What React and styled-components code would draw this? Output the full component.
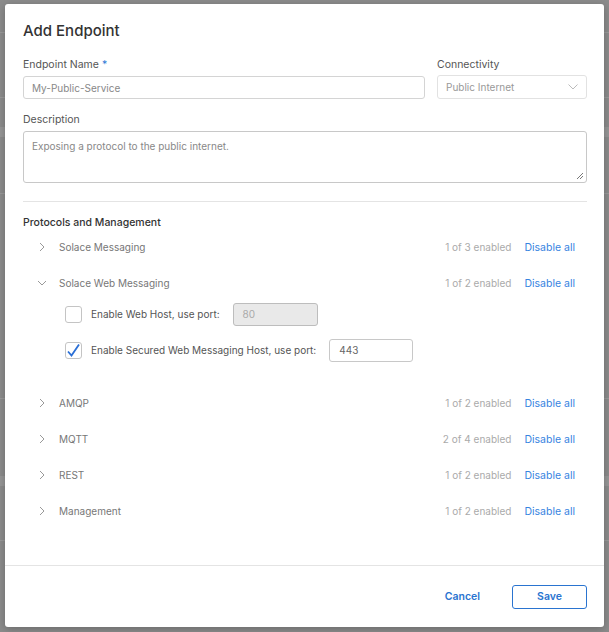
import React from "react";
import styled, { createGlobalStyle } from "styled-components";

const Global = createGlobalStyle`
  html, body { margin: 0; padding: 0; }
  body {
    background: #8c8c8c;
    font-family: Inter, "Noto Sans", sans-serif;
    width: 609px;
    height: 632px;
    overflow: hidden;
  }
`;

const Backdrop = styled.div`
  width: 609px;
  height: 632px;
  box-sizing: border-box;
  padding: 4px 5px 5px 5px;
  background:
    linear-gradient(#9a9a9a, #9a9a9a) 0 32px / 100% 1px no-repeat,
    linear-gradient(#9a9a9a, #9a9a9a) 0 97px / 100% 1px no-repeat,
    linear-gradient(#979797, #979797) 0 127px / 100% 10px no-repeat,
    linear-gradient(#9a9a9a, #9a9a9a) 0 193px / 100% 1px no-repeat,
    linear-gradient(#9a9a9a, #9a9a9a) 0 398px / 100% 1px no-repeat,
    linear-gradient(#979797, #979797) 0 476px / 100% 10px no-repeat,
    linear-gradient(#9a9a9a, #9a9a9a) 0 540px / 100% 1px no-repeat,
    #8c8c8c;
`;

const Modal = styled.div`
  width: 599px;
  height: 623px;
  background: #fff;
  border-radius: 3px;
  box-shadow: 0 2px 8px rgba(0,0,0,0.25);
  display: flex;
  flex-direction: column;
  box-sizing: border-box;
`;

const Body = styled.div`
  flex: 1;
  padding: 18px 17px 0 18px;
  display: flex;
  flex-direction: column;
`;

const Title = styled.h1`
  margin: 0;
  font-size: 15px;
  font-weight: 500;
  color: #333;
  line-height: 18px;
`;

const FieldRow = styled.div`
  display: grid;
  grid-template-columns: 402px 150px;
  column-gap: 12px;
  margin-top: 18px;
`;

const Field = styled.div`
  display: flex;
  flex-direction: column;
`;

const Label = styled.label`
  font-size: 10.5px;
  color: #555;
  line-height: 13px;
  margin-bottom: 5px;
`;

const Req = styled.span`
  color: #2a7ad6;
`;

const TextInput = styled.div`
  height: 23px;
  box-sizing: border-box;
  border: 1px solid #d4d4d4;
  border-radius: 3px;
  padding: 0 8px;
  display: flex;
  align-items: center;
  font-size: 10px;
  color: #888;
`;

const Select = styled(TextInput)`
  justify-content: space-between;
  border-color: #e2e2e2;
  color: #999;
  height: 24px;
  margin-top: -1px;
`;

const TextArea = styled.div`
  position: relative;
  height: 52px;
  box-sizing: border-box;
  border: 1px solid #c8c8c8;
  border-radius: 3px;
  padding: 8px 8px;
  font-size: 10px;
  color: #888;
`;

const Grip = styled.svg`
  position: absolute;
  right: 2px;
  bottom: 2px;
`;

const DescField = styled(Field)`
  margin-top: 14px;
`;

const Divider = styled.hr`
  border: none;
  border-top: 1px solid #e4e4e4;
  margin: 18px 0 0 0;
`;

const SectionTitle = styled.div`
  margin-top: 14px;
  font-size: 10.5px;
  font-weight: 500;
  color: #333;
  line-height: 13px;
`;

const List = styled.div`
  display: flex;
  flex-direction: column;
`;

const Row = styled.div`
  display: flex;
  align-items: center;
  height: 36px;
  padding-left: 14px;
  padding-right: 12px;
`;

const Chevron = styled.svg`
  width: 10px;
  height: 10px;
  margin-right: 12px;
  flex: none;
`;

const RowLabel = styled.span`
  font-size: 10px;
  color: #777;
  flex: 1;
`;

const Count = styled.span`
  font-size: 10px;
  color: #aaa;
  margin-right: 13px;
`;

const Link = styled.span`
  font-size: 10.5px;
  color: #3784df;
`;

const SubList = styled.div`
  margin-top: -5px;
  padding-bottom: 17px;
`;

const SubRow = styled.div`
  display: flex;
  align-items: center;
  height: 36px;
  padding-left: 42px;
`;

const Check = styled.div`
  width: 17px;
  height: 17px;
  box-sizing: border-box;
  border: 1px solid #c4c4c4;
  border-radius: 3px;
  margin-right: 9px;
  display: flex;
  align-items: center;
  justify-content: center;
`;

const SubLabel = styled.span`
  font-size: 10px;
  color: #555;
  margin-right: 13px;
`;

const Port = styled.div`
  width: ${p => p.$w}px;
  height: 23px;
  box-sizing: border-box;
  border: 1px solid ${p => (p.$disabled ? "#bdbdbd" : "#c8c8c8")};
  background: ${p => (p.$disabled ? "#e9e9e9" : "#fff")};
  border-radius: 3px;
  display: flex;
  align-items: center;
  padding-left: 9px;
  font-size: 10px;
  color: ${p => (p.$disabled ? "#aaa" : "#666")};
`;

const Footer = styled.div`
  border-top: 1px solid #e4e4e4;
  height: 61px;
  display: flex;
  align-items: center;
  justify-content: flex-end;
  padding-right: 17px;
  gap: 32px;
`;

const TextButton = styled.button`
  background: none;
  border: none;
  font-family: inherit;
  font-size: 10.5px;
  font-weight: 600;
  color: #2a74d0;
  padding: 0;
`;

const OutlineButton = styled.button`
  width: 75px;
  height: 24px;
  background: #fff;
  border: 1px solid #2a74d0;
  border-radius: 3px;
  font-family: inherit;
  font-size: 10.5px;
  font-weight: 600;
  color: #2a74d0;
`;

const ChevronRight = () => (
  <Chevron viewBox="0 0 10 10">
    <path d="M3 1 L7 5 L3 9" fill="none" stroke="#999" strokeWidth="1" />
  </Chevron>
);
const ChevronDown = () => (
  <Chevron viewBox="0 0 10 10">
    <path d="M1 3 L5 7 L9 3" fill="none" stroke="#999" strokeWidth="1" />
  </Chevron>
);

const ProtocolRow = ({ name, count, open }) => (
  <Row>
    {open ? <ChevronDown /> : <ChevronRight />}
    <RowLabel>{name}</RowLabel>
    <Count>{count}</Count>
    <Link>Disable all</Link>
  </Row>
);

export default function App() {
  return (
    <>
      <Global />
      <Backdrop>
        <Modal>
          <Body>
            <Title>Add Endpoint</Title>
            <FieldRow>
              <Field>
                <Label>
                  Endpoint Name <Req>*</Req>
                </Label>
                <TextInput>My-Public-Service</TextInput>
              </Field>
              <Field>
                <Label>Connectivity</Label>
                <Select>
                  Public Internet
                  <svg width="10" height="6" viewBox="0 0 10 6">
                    <path d="M0.5 0.5 L5 5 L9.5 0.5" fill="none" stroke="#bbb" strokeWidth="1" />
                  </svg>
                </Select>
              </Field>
            </FieldRow>
            <DescField>
              <Label>Description</Label>
              <TextArea>
                Exposing a protocol to the public internet.
                <Grip width="8" height="8" viewBox="0 0 8 8">
                  <path d="M1 7 L7 1 M4 7 L7 4" stroke="#555" strokeWidth="0.8" />
                </Grip>
              </TextArea>
            </DescField>
            <Divider />
            <SectionTitle>Protocols and Management</SectionTitle>
            <List>
              <ProtocolRow name="Solace Messaging" count="1 of 3 enabled" />
              <ProtocolRow name="Solace Web Messaging" count="1 of 2 enabled" open />
              <SubList>
                <SubRow>
                  <Check />
                  <SubLabel>Enable Web Host, use port:</SubLabel>
                  <Port $w={85} $disabled>80</Port>
                </SubRow>
                <SubRow>
                  <Check>
                    <svg width="15" height="15" viewBox="0 0 15 15">
                      <path d="M2 8.5 L5.5 12.5 L13 1.5" fill="none" stroke="#2a6fd6" strokeWidth="1.8" />
                    </svg>
                  </Check>
                  <SubLabel>Enable Secured Web Messaging Host, use port:</SubLabel>
                  <Port $w={84}>443</Port>
                </SubRow>
              </SubList>
              <ProtocolRow name="AMQP" count="1 of 2 enabled" />
              <ProtocolRow name="MQTT" count="2 of 4 enabled" />
              <ProtocolRow name="REST" count="1 of 2 enabled" />
              <ProtocolRow name="Management" count="1 of 2 enabled" />
            </List>
          </Body>
          <Footer>
            <TextButton>Cancel</TextButton>
            <OutlineButton>Save</OutlineButton>
          </Footer>
        </Modal>
      </Backdrop>
    </>
  );
}
